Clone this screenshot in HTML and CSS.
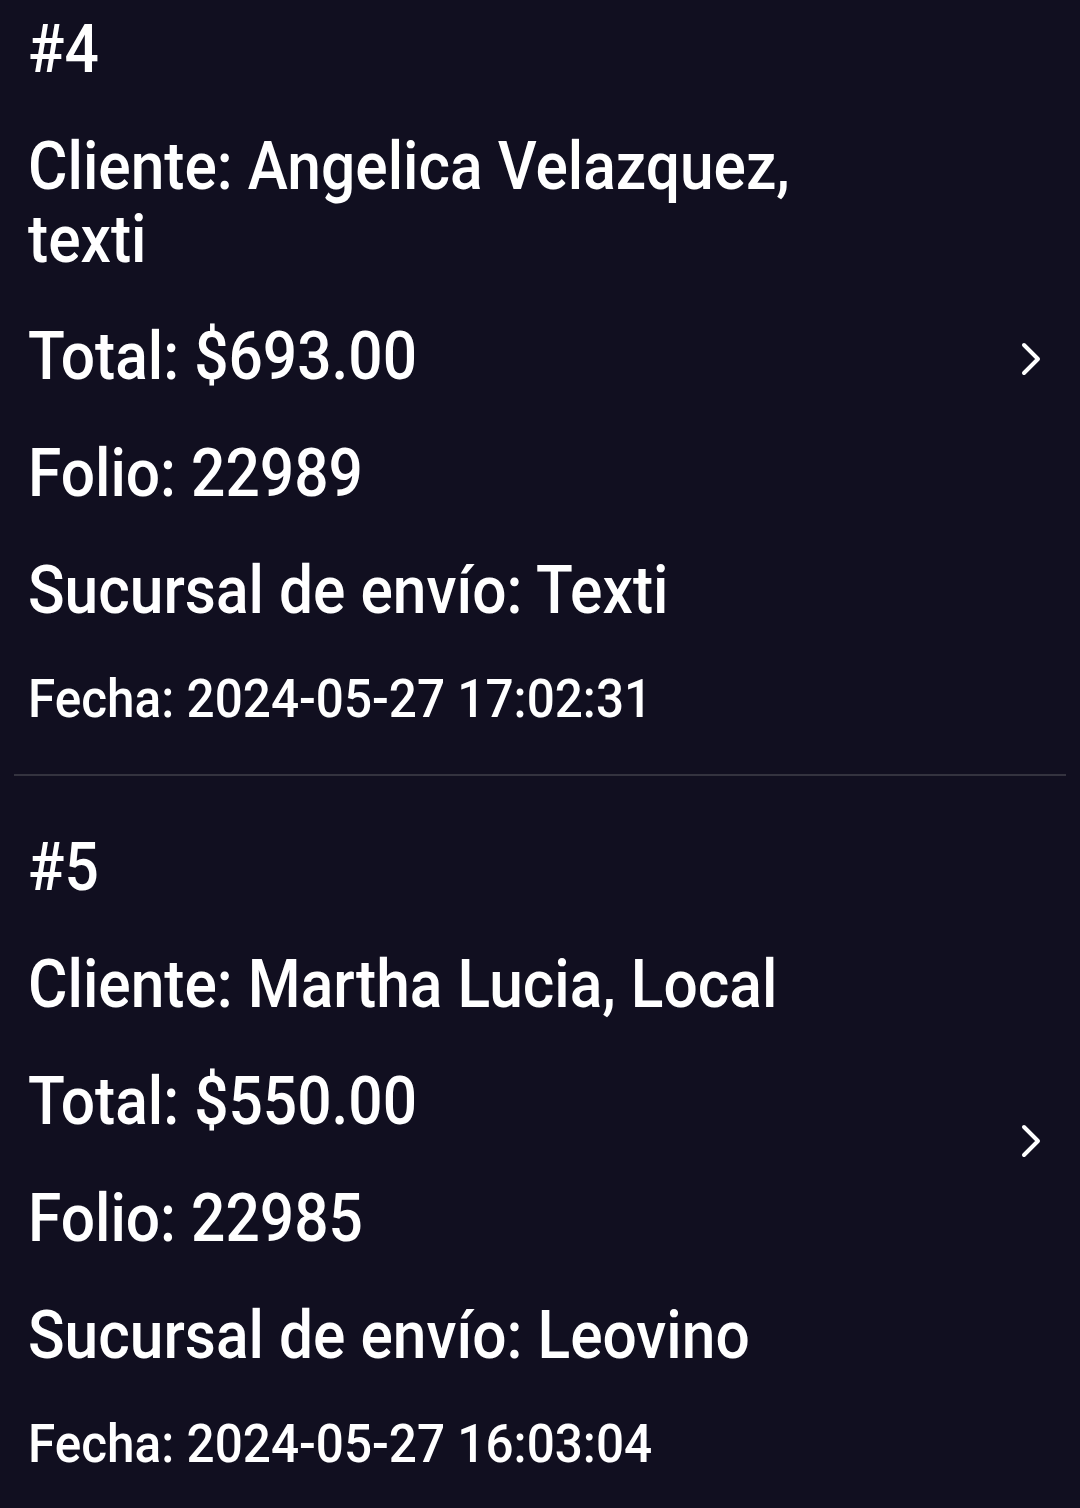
FILE: index.html
```html
<!DOCTYPE html>
<html lang="es">
<head>
<meta charset="utf-8">
<title>Pedidos</title>
<link rel="stylesheet" href="styles.css">
</head>
<body>
<div class="list">
  <div class="card">
    <div class="info">
      <div class="line">#4</div>
      <div class="line">Cliente: Angelica Velazquez,<br>texti</div>
      <div class="line">Total: $693.00</div>
      <div class="line">Folio: 22989</div>
      <div class="line">Sucursal de envío: Texti</div>
      <div class="line date">Fecha: 2024-05-27 17:02:31</div>
    </div>
    <svg class="chev" width="24" height="36" viewBox="0 0 24 36"><path d="M4 4 L18 18 L4 32" fill="none" stroke="#fff" stroke-width="4" stroke-linecap="round" stroke-linejoin="round"/></svg>
  </div>
  <div class="divider"></div>
  <div class="card">
    <div class="info">
      <div class="line">#5</div>
      <div class="line">Cliente: Martha Lucia, Local</div>
      <div class="line">Total: $550.00</div>
      <div class="line">Folio: 22985</div>
      <div class="line">Sucursal de envío: Leovino</div>
      <div class="line date">Fecha: 2024-05-27 16:03:04</div>
    </div>
    <svg class="chev" width="24" height="36" viewBox="0 0 24 36"><path d="M4 4 L18 18 L4 32" fill="none" stroke="#fff" stroke-width="4" stroke-linecap="round" stroke-linejoin="round"/></svg>
  </div>
</div>
</body>
</html>
```

FILE: styles.css
```css
html, body {
  margin: 0;
  padding: 0;
  background: #110f20;
  overflow: hidden;
}
body {
  font-family: Roboto, "Noto Sans", sans-serif;
  color: #ffffff;
}
.list {
  margin-top: -42px;
  padding: 0 14px;
}
.card {
  display: flex;
  align-items: center;
}
.info {
  flex: 1;
  display: flex;
  flex-direction: column;
  gap: 44px;
  padding: 55px 0 43px 14px;
}
.line {
  font-size: 66px;
  line-height: 73px;
  font-weight: 500;
  white-space: nowrap;
  transform: scaleX(0.916);
  transform-origin: left center;
}
.line.date {
  font-size: 54px;
  line-height: 64px;
  margin-top: -4px;
}
.chev {
  margin: 0 22px 14px 0;
}
.divider {
  height: 2px;
  background: #34333f;
}
```
